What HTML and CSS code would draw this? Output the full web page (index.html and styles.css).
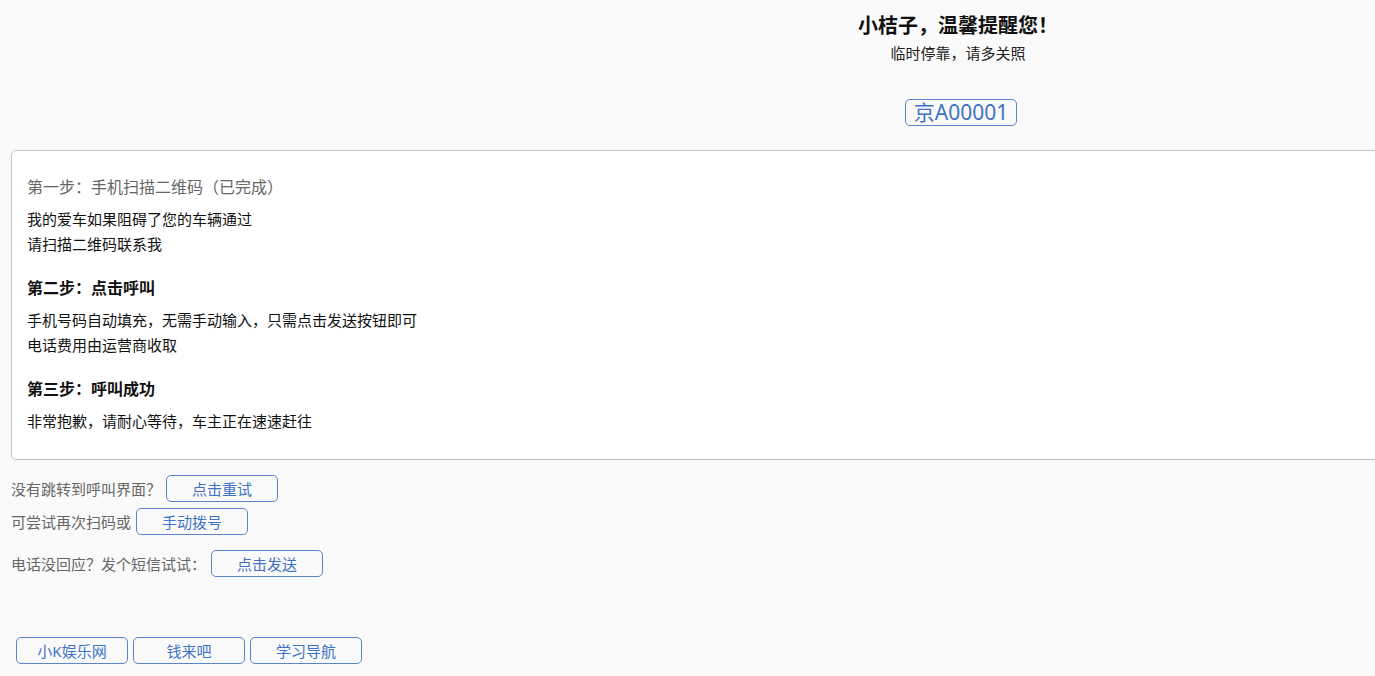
FILE: index.html
```html
<!DOCTYPE html>
<html lang="zh-CN">
<head>
    <meta charset="UTF-8">
    <meta name="viewport" content="width=device-width, initial-scale=1.0">
    <title>挪车通知</title>
    <link rel="stylesheet" href="styles.css">
</head>
<body>
    <div class="page">
        <div class="top">
            <h1 class="title">小桔子，温馨提醒您！</h1>
            <p class="subtitle">临时停靠，请多关照</p>
            <span class="plate">京A00001</span>
        </div>

        <div class="card">
            <p class="step done">第一步：手机扫描二维码（已完成）</p>
            <p class="desc">我的爱车如果阻碍了您的车辆通过<br>请扫描二维码联系我</p>

            <p class="step">第二步：点击呼叫</p>
            <p class="desc">手机号码自动填充，无需手动输入，只需点击发送按钮即可<br>电话费用由运营商收取</p>

            <p class="step">第三步：呼叫成功</p>
            <p class="desc">非常抱歉，请耐心等待，车主正在速速赶往</p>
        </div>

        <div class="row row-first">
            <span class="hint">没有跳转到呼叫界面？</span>
            <button class="btn">点击重试</button>
        </div>
        <div class="row row-second">
            <span class="hint">可尝试再次扫码或</span>
            <button class="btn">手动拨号</button>
        </div>
        <div class="row row-third">
            <span class="hint">电话没回应？发个短信试试：</span>
            <button class="btn">点击发送</button>
        </div>

        <div class="links">
            <button class="btn">小K娱乐网</button>
            <button class="btn">钱来吧</button>
            <button class="btn">学习导航</button>
        </div>
    </div>
</body>
</html>
```

FILE: styles.css
```css
html {
    overflow: hidden;
}

body {
    margin: 0;
    background-color: #fafafa;
    font-family: "Noto Sans", "Noto Sans CJK SC", sans-serif;
    color: #111;
}

.page {
    width: 1894px;
    padding-left: 11px;
}

.top {
    text-align: center;
}

.title {
    margin: 14px 0 0;
    font-size: 20px;
    line-height: 24px;
    font-weight: bold;
}

.subtitle {
    margin: 5px 0 0;
    font-size: 15px;
    line-height: 20px;
    color: #222;
}

.plate {
    display: inline-block;
    box-sizing: border-box;
    width: 112px;
    height: 27px;
    margin-top: 36px;
    margin-left: 6px;
    border: 1px solid #5a84cc;
    border-radius: 5px;
    font-size: 21px;
    line-height: 25px;
    color: #3f72c6;
}

.card {
    margin-top: 24px;
    padding: 0 15px 25px 15px;
    background-color: #ffffff;
    border: 1px solid #c4c4c4;
    border-radius: 5px;
    box-shadow: 0 0 2px rgba(0, 0, 0, 0.05);
}

.step {
    margin: 19px 0 0;
    font-size: 16px;
    line-height: 24px;
    font-weight: bold;
}

.step.done {
    margin-top: 24px;
    font-weight: normal;
    color: #666;
}

.desc {
    margin: 8px 0 0;
    font-size: 15px;
    line-height: 25px;
}

.row {
    display: flex;
    align-items: center;
    gap: 5px;
}

.row-first {
    margin-top: 15px;
}

.row-second {
    margin-top: 6px;
}

.row-third {
    margin-top: 15px;
}

.hint {
    font-size: 15px;
    color: #666;
}

.btn {
    box-sizing: border-box;
    width: 112px;
    height: 27px;
    padding: 0;
    background: transparent;
    border: 1px solid #5a84cc;
    border-radius: 5px;
    font-family: "Noto Sans", "Noto Sans CJK SC", sans-serif;
    font-size: 15px;
    color: #3f72c6;
    cursor: pointer;
}

.links {
    display: flex;
    gap: 5px;
    margin-top: 60px;
    margin-left: 5px;
}
```
